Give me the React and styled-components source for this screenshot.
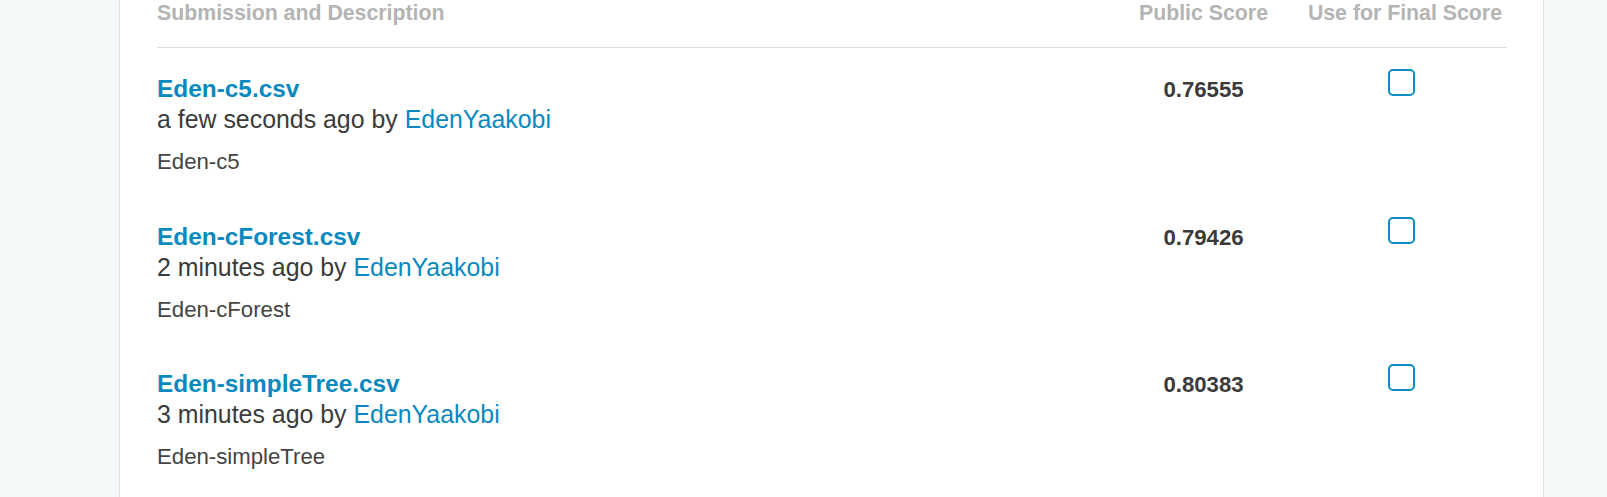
import React from 'react'
import styled, { createGlobalStyle } from 'styled-components'

const GlobalStyle = createGlobalStyle`
    body {
        margin: 0;
        background: #f4f8f9;
        font-family: "Liberation Sans", Arial, sans-serif;
    }
`

const Panel = styled.div`
    box-sizing: border-box;
    width: 1425px;
    min-height: 100vh;
    margin-left: 119px;
    padding: 0 36px 0 37px;
    background: #fff;
    border-left: 1px solid #dcdfe2;
    border-right: 1px solid #dcdfe2;
`

const Grid = styled.div`
    display: grid;
    grid-template-columns: 1fr 193px 207px;
`

const HeadRow = styled(Grid)`
    height: 48px;
    box-sizing: border-box;
    padding-top: 1px;
    border-bottom: 1px solid #dedede;
`

const HeadCell = styled.div`
    font-size: 21.3px;
    line-height: 25px;
    font-weight: 700;
    color: #b4b4b4;
    text-align: ${props => props.align || 'left'};
    padding-right: ${props => props.align === 'right' ? '5px' : '0'};
    white-space: nowrap;
`

const Row = styled(Grid)`
    box-sizing: border-box;
    height: 147.5px;
    padding-top: 25px;
    align-items: start;
`

const Info = styled.div`
    display: flex;
    flex-direction: column;
`

const Title = styled.a`
    font-size: 24.4px;
    line-height: 31px;
    font-weight: 700;
    color: #0a89bf;
    text-decoration: none;
`

const Meta = styled.div`
    font-size: 24.9px;
    line-height: 31px;
    color: #3b3b3b;
`

const User = styled.a`
    color: #0a89bf;
    text-decoration: none;
`

const Desc = styled.div`
    margin-top: 13px;
    font-size: 22.2px;
    line-height: 28px;
    color: #444;
`

const Score = styled.div`
    margin-top: 1px;
    font-size: 22.2px;
    line-height: 31px;
    font-weight: 700;
    color: #3a3a3a;
    text-align: center;
`

const Check = styled.span`
    justify-self: center;
    box-sizing: border-box;
    width: 27px;
    height: 27px;
    margin: -4px 5px 0 0;
    border: 2.6px solid #0f8cc4;
    border-radius: 5px;
`

const submissions = [
    { file: 'Eden-c5.csv', when: 'a few seconds ago', desc: 'Eden-c5', score: '0.76555' },
    { file: 'Eden-cForest.csv', when: '2 minutes ago', desc: 'Eden-cForest', score: '0.79426' },
    { file: 'Eden-simpleTree.csv', when: '3 minutes ago', desc: 'Eden-simpleTree', score: '0.80383' },
]

const App = () => {
    return (
        <>
            <GlobalStyle />
            <Panel>
                <HeadRow>
                    <HeadCell>Submission and Description</HeadCell>
                    <HeadCell align="center">Public Score</HeadCell>
                    <HeadCell align="right">Use for Final Score</HeadCell>
                </HeadRow>
                {submissions.map((s, i) => (
                    <Row key={i}>
                        <Info>
                            <Title href="#">{s.file}</Title>
                            <Meta>{s.when} by <User href="#">EdenYaakobi</User></Meta>
                            <Desc>{s.desc}</Desc>
                        </Info>
                        <Score>{s.score}</Score>
                        <Check />
                    </Row>
                ))}
            </Panel>
        </>
    )
}

export default App
